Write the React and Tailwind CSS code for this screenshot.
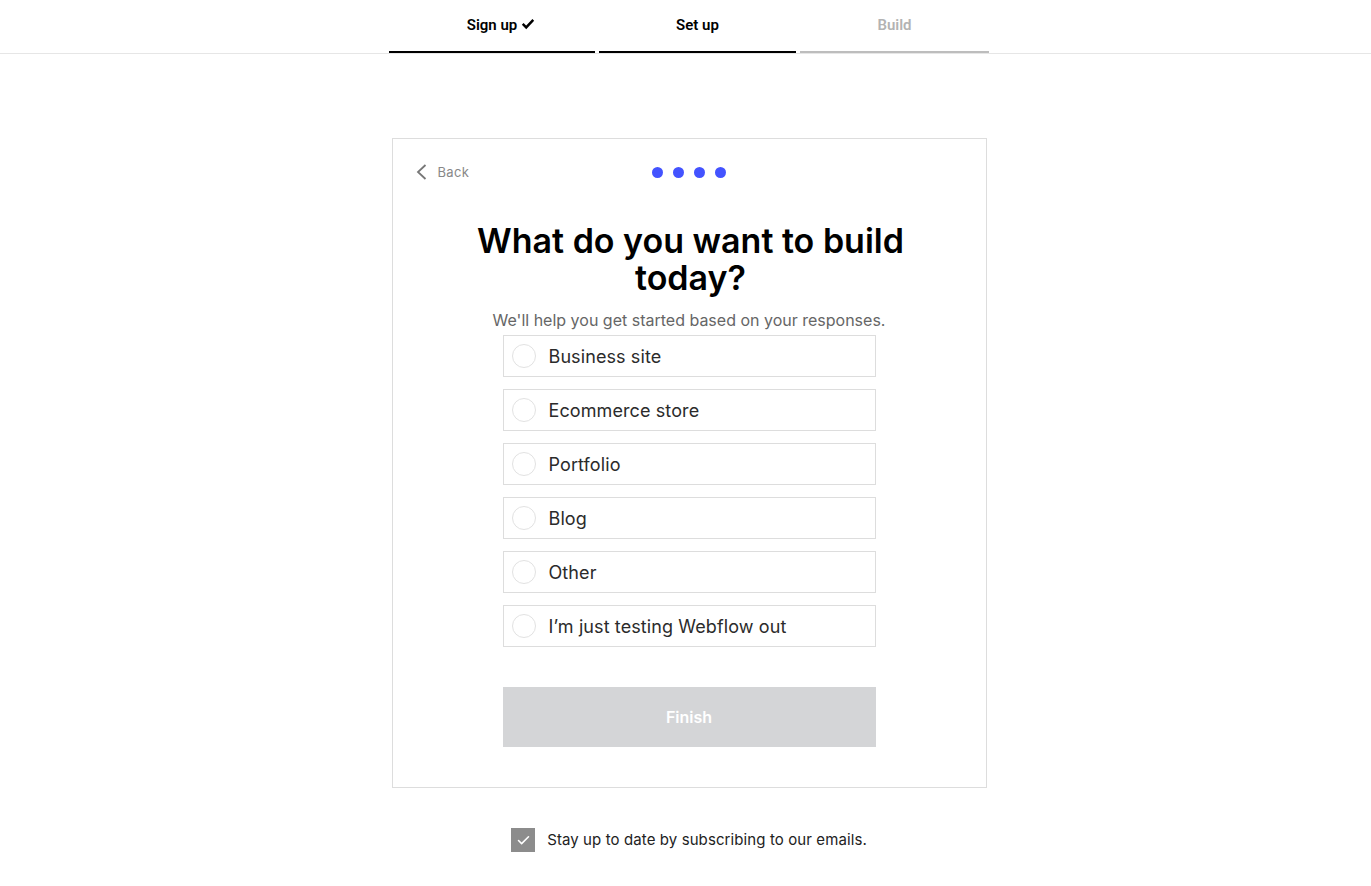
import { Check } from 'lucide-react';

const STEPS = [
  { label: 'Sign up', width: 'w-[206px]', done: true, active: true },
  { label: 'Set up', width: 'w-[197px]', active: true },
  { label: 'Build', width: 'w-[189px]', active: false },
];

const OPTIONS = [
  'Business site',
  'Ecommerce store',
  'Portfolio',
  'Blog',
  'Other',
  'I\u2019m just testing Webflow out',
];

function StepTab({ label, width, done, active }) {
  return (
    <div
      className={`${width} h-[53px] flex items-center justify-center border-b-2 pb-[1px] ${
        active ? 'border-black text-black' : 'border-[#bdbdbd] text-[#b3b3b3]'
      }`}
    >
      <span className="relative text-[15px] font-semibold" style={{ fontFamily: 'Roboto, sans-serif' }}>
        {label}
        {done && (
          <svg
            viewBox="0 0 16 16"
            className="absolute left-[calc(100%+4px)] top-[3px] w-[14px] h-[13px]"
          >
            <path d="M1.5 8.5 L5.8 12.8 L14.5 3.5" fill="none" stroke="black" strokeWidth="3" />
          </svg>
        )}
      </span>
    </div>
  );
}

function Option({ label }) {
  return (
    <label className="flex items-center h-[42px] border border-[#dddddd] pl-[8px] cursor-pointer">
      <span className="w-[24px] h-[24px] rounded-full border border-[#e2e2e2] shrink-0" />
      <span className="ml-[13px] pt-[1px] text-[18px] text-[#2b2b2b] tracking-[0.1px]">{label}</span>
    </label>
  );
}

export default function App() {
  return (
    <div className="min-h-screen bg-white" style={{ fontFamily: 'Inter, "Noto Sans", sans-serif' }}>
      <header className="border-b border-[#e6e6e6]">
        <nav className="flex justify-center gap-[4px] pl-[7px]">
          {STEPS.map((s) => (
            <StepTab key={s.label} {...s} />
          ))}
        </nav>
      </header>

      <main className="flex flex-col items-center pl-[7px] pt-[84px]">
        <section className="w-[595px] border border-[#dddddd] px-[110px] pt-[21px] pb-[40px]">
          <div className="relative h-6 flex items-center justify-center -mx-[86px]">
            <button className="absolute -left-[2px] top-[1px] flex items-center gap-[11px] text-[13px] text-[#888] tracking-[0.3px]">
              <svg viewBox="0 0 12 16" className="w-[12px] h-[16px]">
                <path d="M10.5 1 L3 8 L10.5 15" fill="none" stroke="#777" strokeWidth="1.8" />
              </svg>
              <span className="pt-[2px]">Back</span>
            </button>
            <div className="flex gap-[10px]">
              {[0, 1, 2, 3].map((i) => (
                <span key={i} className="w-[11px] h-[11px] rounded-full bg-[#4353ff]" />
              ))}
            </div>
          </div>

          <h1 className="mt-[38px] mx-auto w-[440px] -translate-x-[32px] text-center text-[34px] leading-[37px] font-semibold text-black">
            What do you want to build today?
          </h1>
          <p className="mt-[12px] text-center text-[16px] leading-6 text-[#666] -mx-[20px]">
            We'll help you get started based on your responses.
          </p>

          <div className="mt-[3px] flex flex-col gap-[12px]">
            {OPTIONS.map((o) => (
              <Option key={o} label={o} />
            ))}
          </div>

          <button className="mt-[40px] w-full h-[60px] bg-[#d4d5d7] text-white text-[16px] font-semibold">
            Finish
          </button>
        </section>

        <label className="mt-[40px] flex items-center gap-[12px]">
          <span className="w-[24px] h-[24px] bg-[#8c8c8c] flex items-center justify-center">
            <Check className="w-[15px] h-[15px] text-white" strokeWidth={2.5} />
          </span>
          <span className="text-[15px] text-[#222] tracking-[0.1px]">
            Stay up to date by subscribing to our emails.
          </span>
        </label>
      </main>
    </div>
  );
}
